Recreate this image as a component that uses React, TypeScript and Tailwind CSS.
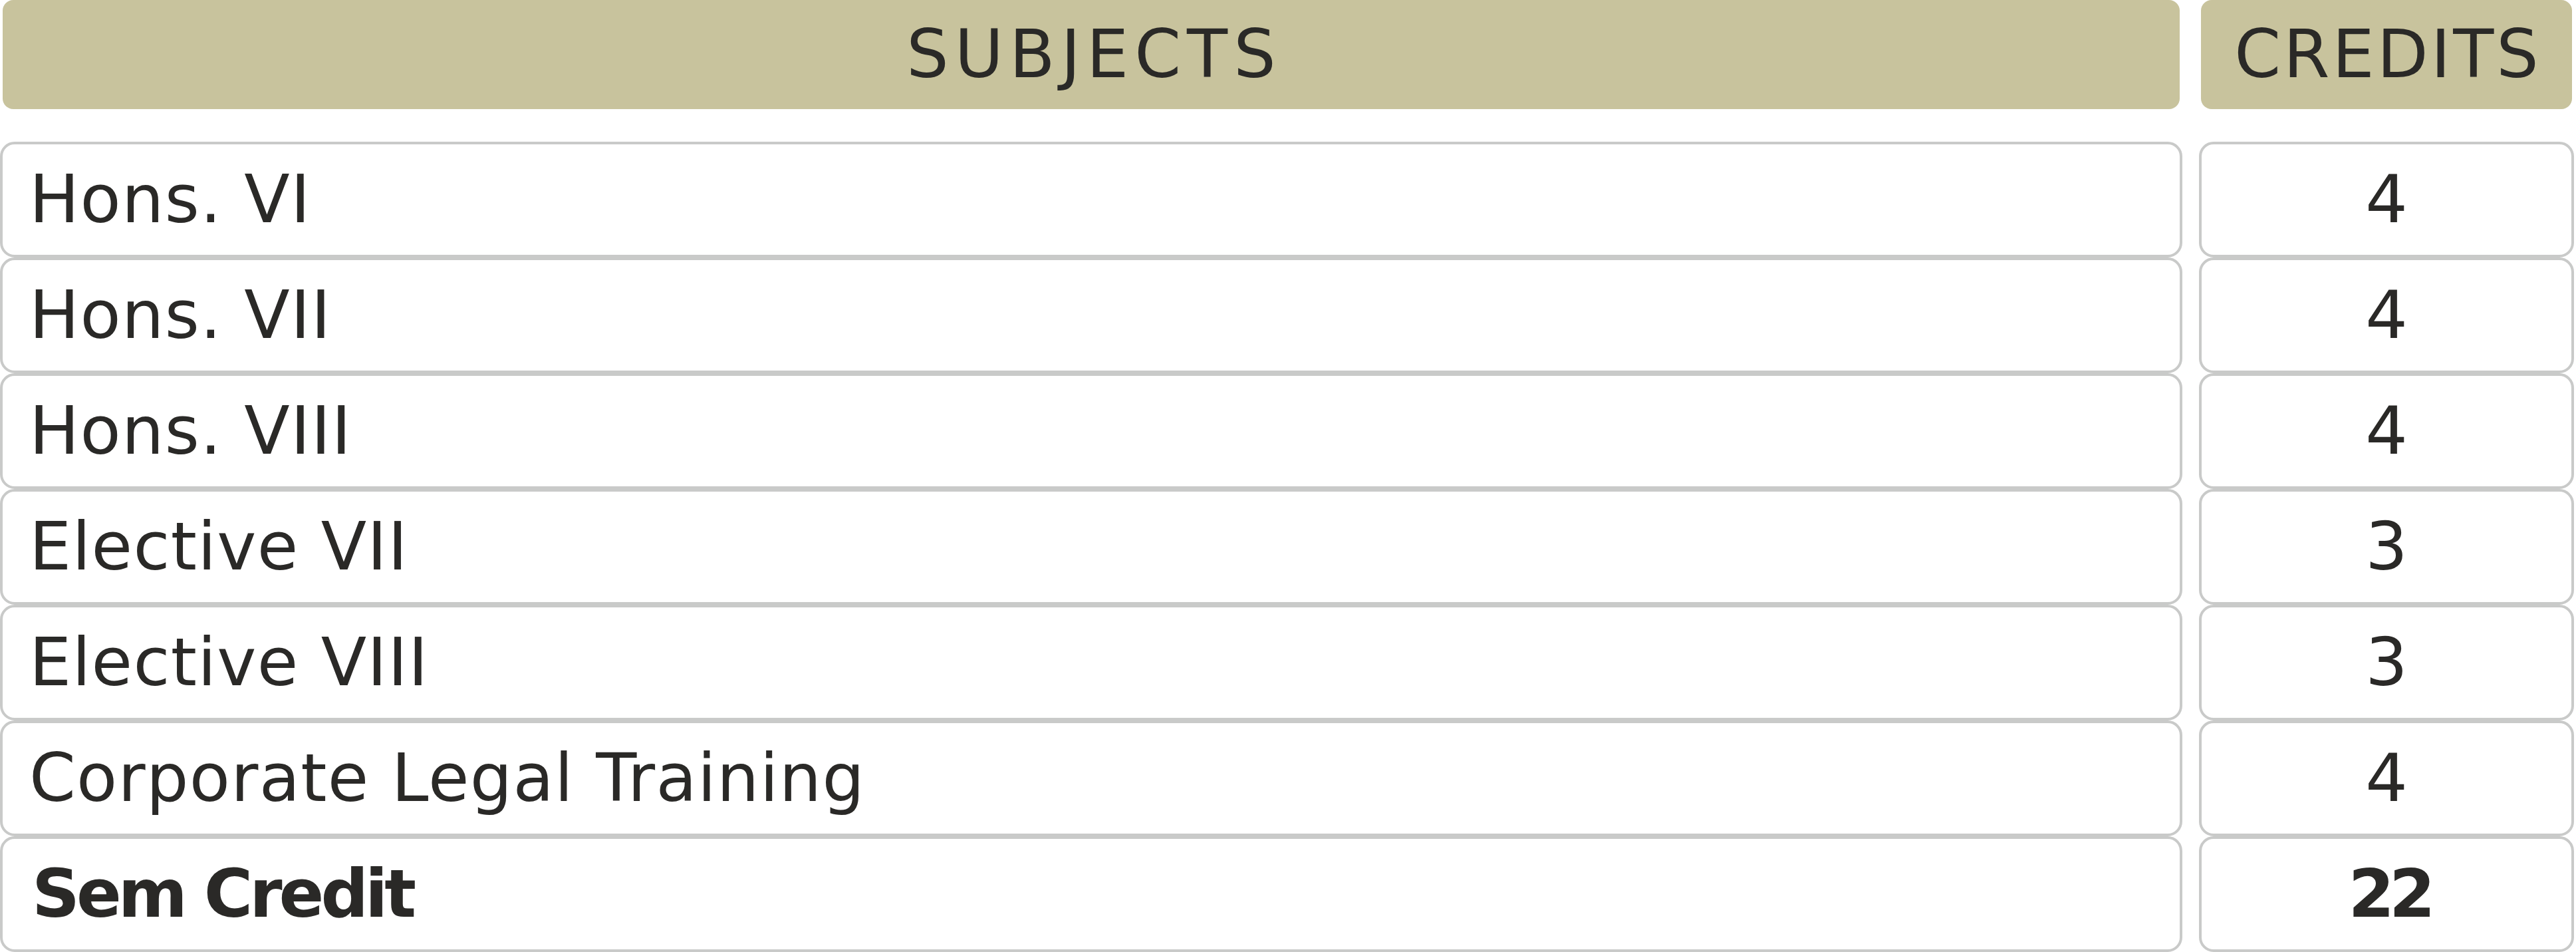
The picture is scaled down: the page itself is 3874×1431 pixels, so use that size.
import React from "react";

const rows = [
  { subject: "Hons. VI", credits: "4" },
  { subject: "Hons. VII", credits: "4" },
  { subject: "Hons. VIII", credits: "4" },
  { subject: "Elective VII", credits: "3" },
  { subject: "Elective VIII", credits: "3" },
  { subject: "Corporate Legal Training", credits: "4" },
];

const cell =
  "h-[174px] flex items-center border-[4px] border-[#c9cac9] rounded-[22px] bg-white";

const App = () => {
  return (
    <div className="w-[3874px] h-[1431px] bg-white text-[#2a2927] font-['DejaVu_Sans',sans-serif] overflow-hidden">
      <div className="grid grid-cols-[3282px_564px] gap-x-[25px]">
        <div className="mx-[4px] h-[164px] mb-[49px] rounded-[16px] bg-[#c8c39d] flex items-center justify-center text-[100px] leading-none tracking-[9px] pl-[9px]">
          SUBJECTS
        </div>
        <div className="mx-[3px] h-[164px] mb-[49px] rounded-[16px] bg-[#c8c39d] flex items-center justify-center text-[100px] leading-none tracking-[4px] pl-[4px]">
          CREDITS
        </div>

        {rows.map((row) => (
          <React.Fragment key={row.subject}>
            <div className={`${cell} pl-[40px] text-[100px] leading-none tracking-[1.3px]`}>
              {row.subject}
            </div>
            <div className={`${cell} justify-center text-[100px] leading-none`}>
              {row.credits}
            </div>
          </React.Fragment>
        ))}

        <div className={`${cell} pl-[44px] text-[100px] leading-none font-bold tracking-[-5px]`}>
          Sem Credit
        </div>
        <div className={`${cell} justify-center text-[100px] leading-none font-bold tracking-[-8px] pl-[8px]`}>
          22
        </div>
      </div>
    </div>
  );
};

export default App;
